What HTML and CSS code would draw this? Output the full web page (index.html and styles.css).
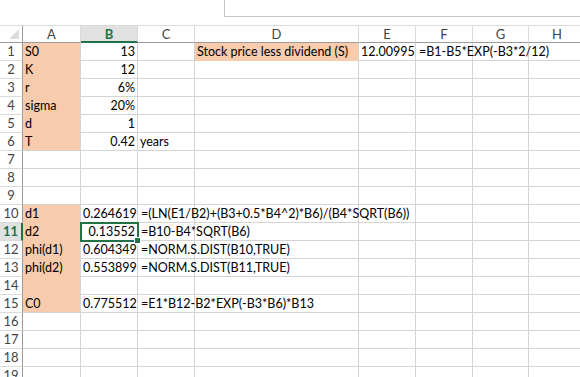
FILE: index.html
```html
<!DOCTYPE html>
<html lang="en">

<head>
	<meta charset="UTF-8">
	<meta name="viewport" content="width=device-width, initial-scale=1.0">
	<title>Black-Scholes</title>
	<link rel="stylesheet" href="styles.css">
</head>

<body>
	<div class="top">
		<div class="formula-box"></div>
	</div>
	<div class="sheet">
		<div class="row head-row">
			<div class="rh corner"><span class="tri"></span></div>
			<div class="ch c-a">A</div>
			<div class="ch c-b sel">B</div>
			<div class="ch c-c">C</div>
			<div class="ch c-d">D</div>
			<div class="ch c-e">E</div>
			<div class="ch c-f">F</div>
			<div class="ch c-g">G</div>
			<div class="ch c-h">H</div>
		</div>

		<div class="row">
			<div class="rh">1</div>
			<div class="cell c-a fill">S0</div>
			<div class="cell c-b num">13</div>
			<div class="cell c-c"></div>
			<div class="cell c-d fill">Stock price less dividend (S)</div>
			<div class="cell c-e num">12.00995</div>
			<div class="cell c-f over">=B1-B5*EXP(-B3*2/12)</div>
			<div class="cell c-g"></div>
			<div class="cell c-h"></div>
		</div>
		<div class="row">
			<div class="rh">2</div>
			<div class="cell c-a fill">K</div>
			<div class="cell c-b num">12</div>
			<div class="cell c-c"></div>
			<div class="cell c-d"></div>
			<div class="cell c-e"></div>
			<div class="cell c-f"></div>
			<div class="cell c-g"></div>
			<div class="cell c-h"></div>
		</div>
		<div class="row">
			<div class="rh">3</div>
			<div class="cell c-a fill">r</div>
			<div class="cell c-b num">6%</div>
			<div class="cell c-c"></div>
			<div class="cell c-d"></div>
			<div class="cell c-e"></div>
			<div class="cell c-f"></div>
			<div class="cell c-g"></div>
			<div class="cell c-h"></div>
		</div>
		<div class="row">
			<div class="rh">4</div>
			<div class="cell c-a fill">sigma</div>
			<div class="cell c-b num">20%</div>
			<div class="cell c-c"></div>
			<div class="cell c-d"></div>
			<div class="cell c-e"></div>
			<div class="cell c-f"></div>
			<div class="cell c-g"></div>
			<div class="cell c-h"></div>
		</div>
		<div class="row">
			<div class="rh">5</div>
			<div class="cell c-a fill">d</div>
			<div class="cell c-b num">1</div>
			<div class="cell c-c"></div>
			<div class="cell c-d"></div>
			<div class="cell c-e"></div>
			<div class="cell c-f"></div>
			<div class="cell c-g"></div>
			<div class="cell c-h"></div>
		</div>
		<div class="row">
			<div class="rh">6</div>
			<div class="cell c-a fill last">T</div>
			<div class="cell c-b num">0.42</div>
			<div class="cell c-c">years</div>
			<div class="cell c-d"></div>
			<div class="cell c-e"></div>
			<div class="cell c-f"></div>
			<div class="cell c-g"></div>
			<div class="cell c-h"></div>
		</div>
		<div class="row">
			<div class="rh">7</div>
			<div class="cell c-a"></div>
			<div class="cell c-b"></div>
			<div class="cell c-c"></div>
			<div class="cell c-d"></div>
			<div class="cell c-e"></div>
			<div class="cell c-f"></div>
			<div class="cell c-g"></div>
			<div class="cell c-h"></div>
		</div>
		<div class="row">
			<div class="rh">8</div>
			<div class="cell c-a"></div>
			<div class="cell c-b"></div>
			<div class="cell c-c"></div>
			<div class="cell c-d"></div>
			<div class="cell c-e"></div>
			<div class="cell c-f"></div>
			<div class="cell c-g"></div>
			<div class="cell c-h"></div>
		</div>
		<div class="row">
			<div class="rh">9</div>
			<div class="cell c-a"></div>
			<div class="cell c-b"></div>
			<div class="cell c-c"></div>
			<div class="cell c-d"></div>
			<div class="cell c-e"></div>
			<div class="cell c-f"></div>
			<div class="cell c-g"></div>
			<div class="cell c-h"></div>
		</div>
		<div class="row">
			<div class="rh">10</div>
			<div class="cell c-a fill">d1</div>
			<div class="cell c-b num">0.264619</div>
			<div class="cell c-c over">=(LN(E1/B2)+(B3+0.5*B4^2)*B6)/(B4*SQRT(B6))</div>
			<div class="cell c-d"></div>
			<div class="cell c-e"></div>
			<div class="cell c-f"></div>
			<div class="cell c-g"></div>
			<div class="cell c-h"></div>
		</div>
		<div class="row">
			<div class="rh sel">11</div>
			<div class="cell c-a fill">d2</div>
			<div class="cell c-b num active">0.13552<span class="handle"></span></div>
			<div class="cell c-c over">=B10-B4*SQRT(B6)</div>
			<div class="cell c-d"></div>
			<div class="cell c-e"></div>
			<div class="cell c-f"></div>
			<div class="cell c-g"></div>
			<div class="cell c-h"></div>
		</div>
		<div class="row">
			<div class="rh">12</div>
			<div class="cell c-a fill">phi(d1)</div>
			<div class="cell c-b num">0.604349</div>
			<div class="cell c-c over">=NORM.S.DIST(B10,TRUE)</div>
			<div class="cell c-d"></div>
			<div class="cell c-e"></div>
			<div class="cell c-f"></div>
			<div class="cell c-g"></div>
			<div class="cell c-h"></div>
		</div>
		<div class="row">
			<div class="rh">13</div>
			<div class="cell c-a fill">phi(d2)</div>
			<div class="cell c-b num">0.553899</div>
			<div class="cell c-c over">=NORM.S.DIST(B11,TRUE)</div>
			<div class="cell c-d"></div>
			<div class="cell c-e"></div>
			<div class="cell c-f"></div>
			<div class="cell c-g"></div>
			<div class="cell c-h"></div>
		</div>
		<div class="row">
			<div class="rh">14</div>
			<div class="cell c-a fill"></div>
			<div class="cell c-b"></div>
			<div class="cell c-c"></div>
			<div class="cell c-d"></div>
			<div class="cell c-e"></div>
			<div class="cell c-f"></div>
			<div class="cell c-g"></div>
			<div class="cell c-h"></div>
		</div>
		<div class="row">
			<div class="rh">15</div>
			<div class="cell c-a fill last">C0</div>
			<div class="cell c-b num">0.775512</div>
			<div class="cell c-c over">=E1*B12-B2*EXP(-B3*B6)*B13</div>
			<div class="cell c-d"></div>
			<div class="cell c-e"></div>
			<div class="cell c-f"></div>
			<div class="cell c-g"></div>
			<div class="cell c-h"></div>
		</div>
		<div class="row">
			<div class="rh">16</div>
			<div class="cell c-a"></div>
			<div class="cell c-b"></div>
			<div class="cell c-c"></div>
			<div class="cell c-d"></div>
			<div class="cell c-e"></div>
			<div class="cell c-f"></div>
			<div class="cell c-g"></div>
			<div class="cell c-h"></div>
		</div>
		<div class="row">
			<div class="rh">17</div>
			<div class="cell c-a"></div>
			<div class="cell c-b"></div>
			<div class="cell c-c"></div>
			<div class="cell c-d"></div>
			<div class="cell c-e"></div>
			<div class="cell c-f"></div>
			<div class="cell c-g"></div>
			<div class="cell c-h"></div>
		</div>
		<div class="row">
			<div class="rh">18</div>
			<div class="cell c-a"></div>
			<div class="cell c-b"></div>
			<div class="cell c-c"></div>
			<div class="cell c-d"></div>
			<div class="cell c-e"></div>
			<div class="cell c-f"></div>
			<div class="cell c-g"></div>
			<div class="cell c-h"></div>
		</div>
		<div class="row">
			<div class="rh">19</div>
			<div class="cell c-a"></div>
			<div class="cell c-b"></div>
			<div class="cell c-c"></div>
			<div class="cell c-d"></div>
			<div class="cell c-e"></div>
			<div class="cell c-f"></div>
			<div class="cell c-g"></div>
			<div class="cell c-h"></div>
		</div>
	</div>
</body>

</html>
```

FILE: styles.css
```css
body {
	font-family: Lato, "Liberation Sans", sans-serif;
	font-size: 12.5px;
	background-color: #fff;
	color: #000;
	margin: 0;
	padding: 0;
	overflow: hidden;
}

.top {
	height: 25px;
	padding-left: 224px;
	box-sizing: border-box;
}

.formula-box {
	height: 16px;
	border-left: 1px solid #c6c6c6;
	border-bottom: 1px solid #c6c6c6;
}

.sheet {
	width: 600px;
}

.row {
	display: flex;
	height: 18px;
}

.head-row {
	border-top: 1px solid #dadada;
	height: 17px;
}

.rh,
.ch,
.cell {
	box-sizing: border-box;
	height: 18px;
	border-right: 1px solid #d4d4d4;
	border-bottom: 1px solid #d4d4d4;
	line-height: 17px;
	white-space: nowrap;
	flex-shrink: 0;
}

.rh {
	width: 23px;
	text-align: center;
	color: #444;
	font-size: 13px;
	background-color: #fff;
	border-right-color: #9b9b9b;
	border-bottom-color: #dadada;
}

.head-row .rh,
.ch {
	height: 17px;
	line-height: 16px;
	border-bottom-color: #9b9b9b;
}

.ch {
	text-align: center;
	color: #444;
	font-size: 13px;
	border-right-color: #dadada;
}

.corner {
	position: relative;
}

.tri {
	position: absolute;
	right: 3px;
	bottom: 3px;
	width: 0;
	height: 0;
	border-left: 10px solid transparent;
	border-bottom: 10px solid #dcdcdc;
}

.ch.sel {
	background-color: #e1e1e1;
	color: #217346;
	font-weight: bold;
	border-bottom: 2px solid #217346;
}

.rh.sel {
	background-color: #e1e1e1;
	color: #217346;
	font-weight: bold;
	border-right: 2px solid #217346;
}

.c-a { width: 58px; }
.c-b { width: 57px; }
.c-c { width: 57px; }
.c-d { width: 164px; }
.c-e { width: 57px; }
.c-f { width: 57px; }
.c-g { width: 56px; }
.c-h { width: 57px; }

.cell {
	padding: 0 2px;
}

.fill {
	background-color: #f8cbad;
	border-bottom-color: #f8cbad;
}

.fill.last {
	border-bottom-color: #d4d4d4;
}

.num {
	text-align: right;
}

.over {
	overflow: visible;
	position: relative;
	z-index: 1;
	padding-left: 3px;
}

.active {
	position: relative;
	outline: 2px solid #217346;
	outline-offset: -1px;
	z-index: 2;
}

.handle {
	position: absolute;
	right: -4px;
	bottom: -4px;
	width: 5px;
	height: 5px;
	background-color: #217346;
	border: 1px solid #fff;
}
```
